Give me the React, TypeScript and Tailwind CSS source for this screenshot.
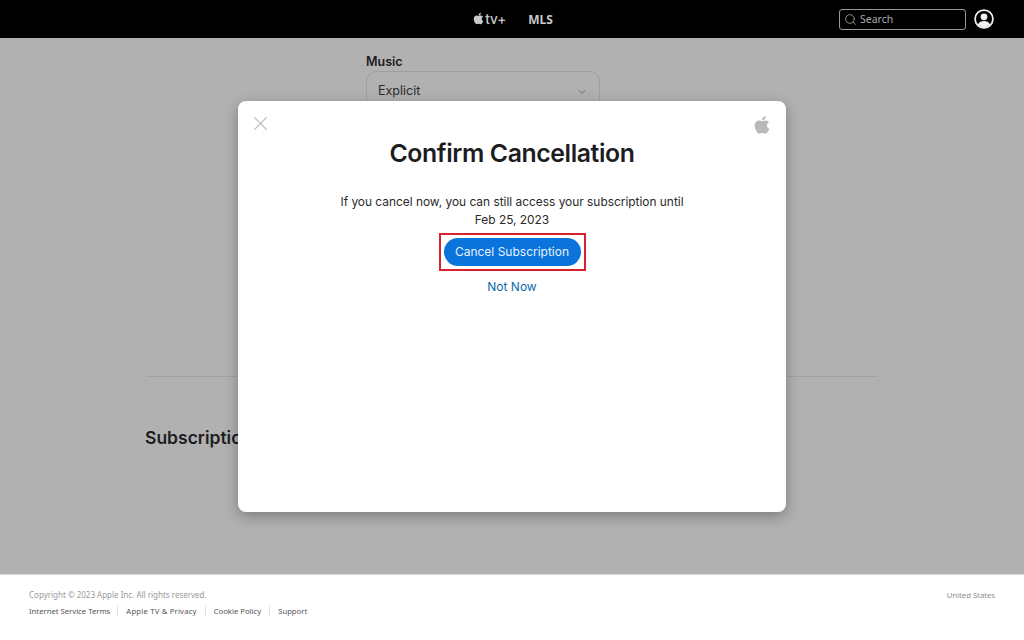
import { ChevronDown, Search, X } from 'lucide-react'
import { FaApple } from 'react-icons/fa'

function Header() {
  return (
    <header className="h-[38px] bg-black flex items-center relative shrink-0">
      <div className="flex-1 flex items-center justify-center gap-[22px] text-[#c8c8c8] pl-[1px]">
        <span className="flex items-center font-['Inter',sans-serif] font-medium text-[13.5px]">
          <FaApple size={13} className="mb-[2px]" />
          <span>tv+</span>
        </span>
        <span className="font-['Noto_Sans',sans-serif] font-bold text-[12px] mt-[2px]">MLS</span>
      </div>
      <div className="absolute left-[839px] top-[9px] flex items-center gap-[8px]">
        <div className="w-[127px] h-[21px] border border-[#9a9a9a] rounded-[3px] flex items-center pl-[4px] gap-[3px] text-[#a8a8a8]">
          <Search size={13} strokeWidth={1.5} />
          <span className="font-['Noto_Sans',sans-serif] text-[10.5px] leading-none">Search</span>
        </div>
        <svg width="20" height="20" viewBox="0 0 20 20" className="-mt-[2px]">
          <circle cx="10" cy="10" r="8.9" fill="none" stroke="#f0f0f0" strokeWidth="1.7" />
          <circle cx="10" cy="7.8" r="3.4" fill="#f0f0f0" />
          <path d="M3.8 15.6C5 12.9 7.3 12 10 12s5 .9 6.2 3.6C14.8 17.2 12.5 18.2 10 18.2s-4.8-1-6.2-2.6z" fill="#f0f0f0" />
        </svg>
      </div>
    </header>
  )
}

function Footer() {
  return (
    <footer className="h-[66px] bg-white border-t border-[#d8d8d8] shrink-0 flex justify-between pl-[29px] pr-[29px] pt-[15px] font-['Noto_Sans',sans-serif] text-[8px] leading-[10px]">
      <div>
        <p className="text-[#9a9a9a]">Copyright © 2023 Apple Inc. All rights reserved.</p>
        <ul className="flex items-center mt-[6px] text-[7.7px] text-[#555555]">
          <li className="pr-[7px] border-r border-[#e4e4e4]">Internet Service Terms</li>
          <li className="px-[8px] border-r border-[#e4e4e4] tracking-[0.2px]">Apple TV &amp; Privacy</li>
          <li className="px-[8px] border-r border-[#e4e4e4]">Cookie Policy</li>
          <li className="pl-[8px]">Support</li>
        </ul>
      </div>
      <p className="text-[#8e8e8e] text-[7.7px]">United States</p>
    </footer>
  )
}

function Page() {
  return (
    <main className="flex-1 bg-[#b2b1b2] px-[146px] font-['Inter',sans-serif]">
      <div className="w-[234px] ml-[220px] pt-[16px]">
        <p className="text-[12.5px] leading-[16px] font-semibold text-[#1d1d1f]">Music</p>
        <div className="mt-[1px] h-[58px] border border-[#a09ea0] rounded-[10px] flex items-start justify-between pl-[11px] pr-[11px] pt-[10px] text-[12.5px] text-[#2a2a2a]">
          <span>Explicit</span>
          <ChevronDown size={12} strokeWidth={1.5} className="mt-[4px] text-[#555555]" />
        </div>
      </div>
      <div className="mt-[247px] border-t border-[#a3a1a3]" />
      <h2 className="mt-[50px] -ml-px text-[17.5px] leading-[22px] font-semibold text-[#1d1d1f]">Subscription</h2>
    </main>
  )
}

function Modal() {
  return (
    <div className="absolute left-[238px] top-[101px] w-[548px] h-[411px] bg-white rounded-[8px] shadow-[0_4px_14px_rgba(0,0,0,0.3)] font-['Inter',sans-serif] flex flex-col items-center">
      <X size={23} strokeWidth={1.4} className="absolute left-[11px] top-[11px] text-[#c4c4c4]" />
      <FaApple size={20} className="absolute right-[14px] top-[14px] text-[#b9b9b9]" />
      <h1 className="mt-[35px] text-[24.8px] leading-[34px] font-semibold tracking-[-0.4px] text-[#1d1d1f]">Confirm Cancellation</h1>
      <p className="mt-[23px] w-[400px] text-center text-[11.9px] leading-[18px] text-[#2a2a2a]">
        If you cancel now, you can still access your subscription until
        <br />
        Feb 25, 2023
      </p>
      <div className="mt-[4px] border-[2px] border-[#d8202f] p-[3px]">
        <button className="block w-[137px] h-[28px] rounded-full bg-[#0a74dc] text-[#e8f2fc] text-[12px] leading-none">
          Cancel Subscription
        </button>
      </div>
      <a className="mt-[8px] text-[12px] leading-[16px] text-[#0b6aa8]">Not Now</a>
    </div>
  )
}

export default function App() {
  return (
    <div className="relative w-[1024px] h-[640px] overflow-hidden flex flex-col">
      <Header />
      <Page />
      <Footer />
      <Modal />
    </div>
  )
}
